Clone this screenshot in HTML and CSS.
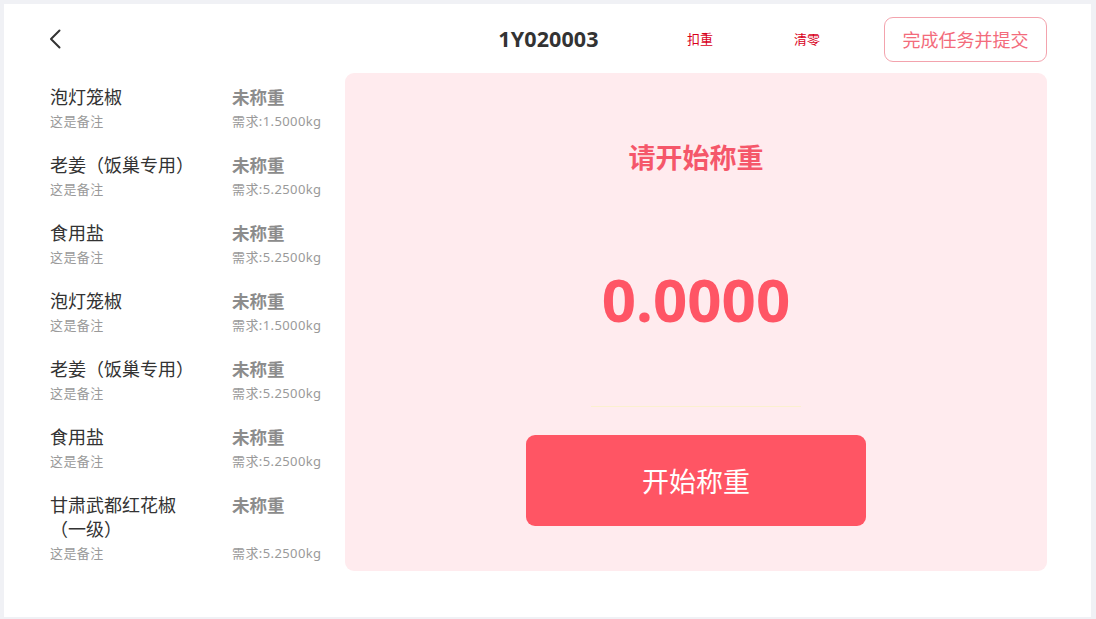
FILE: index.html
```html
<!DOCTYPE html>
<html lang="zh">
<head>
<meta charset="utf-8">
<link rel="stylesheet" href="styles.css">
</head>
<body>
<div class="card">
  <header class="header">
    <div class="header-left">
      <svg class="back" width="12" height="20" viewBox="0 0 12 20"><path d="M10.5 1.5 L2 10 L10.5 18.5" fill="none" stroke="#333" stroke-width="2" stroke-linecap="round" stroke-linejoin="round"/></svg>
    </div>
    <div class="title">1Y020003</div>
    <div class="header-right">
      <span class="link link-deduct">扣重</span>
      <span class="link link-zero">清零</span>
      <button class="submit">完成任务并提交</button>
    </div>
  </header>
  <div class="main">
    <ul class="list">
      <li class="row"><div class="info"><div class="name">泡灯笼椒</div><div class="note">这是备注</div></div><div class="state"><div class="status">未称重</div><div class="need">需求:1.5000kg</div></div></li>
      <li class="row"><div class="info"><div class="name">老姜（饭巢专用）</div><div class="note">这是备注</div></div><div class="state"><div class="status">未称重</div><div class="need">需求:5.2500kg</div></div></li>
      <li class="row"><div class="info"><div class="name">食用盐</div><div class="note">这是备注</div></div><div class="state"><div class="status">未称重</div><div class="need">需求:5.2500kg</div></div></li>
      <li class="row"><div class="info"><div class="name">泡灯笼椒</div><div class="note">这是备注</div></div><div class="state"><div class="status">未称重</div><div class="need">需求:1.5000kg</div></div></li>
      <li class="row"><div class="info"><div class="name">老姜（饭巢专用）</div><div class="note">这是备注</div></div><div class="state"><div class="status">未称重</div><div class="need">需求:5.2500kg</div></div></li>
      <li class="row"><div class="info"><div class="name">食用盐</div><div class="note">这是备注</div></div><div class="state"><div class="status">未称重</div><div class="need">需求:5.2500kg</div></div></li>
      <li class="row"><div class="info"><div class="name">甘肃武都红花椒（一级）</div><div class="note">这是备注</div></div><div class="state"><div class="status">未称重</div><div class="need">需求:5.2500kg</div></div></li>
    </ul>
    <section class="panel">
      <div class="prompt">请开始称重</div>
      <div class="weight">0.0000</div>
      <div class="divider"></div>
      <button class="start">开始称重</button>
    </section>
  </div>
</div>
</body>
</html>
```

FILE: styles.css
```css
* { box-sizing: border-box; }
html, body { margin: 0; padding: 0; }
body {
  width: 1096px;
  height: 619px;
  background: #f0f1f5;
  padding: 4px 5px 2px 4px;
  font-family: "Noto Sans", "Noto Sans CJK SC", sans-serif;
  color: #333;
  overflow: hidden;
}
.card {
  background: #fff;
  height: 613px;
  padding: 13px 44px 46px 46px;
  display: flex;
  flex-direction: column;
}
.header {
  height: 45px;
  display: grid;
  grid-template-columns: 1fr auto 1fr;
  align-items: center;
}
.header-left { display: flex; align-items: center; }
.back { display: block; margin-left: -1px; margin-top: -1px; }
.title {
  font-size: 21.5px;
  line-height: 28px;
  margin-top: -2px;
  font-weight: 700;
  color: #333;
  letter-spacing: 0.1px;
}
.header-right {
  display: flex;
  align-items: center;
  justify-content: flex-end;
}
.link {
  font-size: 13px;
  line-height: 18px;
  margin-top: -2px;
  color: #d9001b;
  font-family: "Noto Sans CJK SC", sans-serif;
}
.link-zero { margin-left: 81px; }
.submit {
  margin-left: 64px;
  width: 163px;
  height: 45px;
  border: 1px solid #f3a3ad;
  border-radius: 9px;
  background: #fff;
  color: #f36b7b;
  font-family: "Noto Sans CJK SC", sans-serif;
  font-size: 18px;
  line-height: 24px;
  padding: 0 0 2px 0;
}
.main {
  flex: 1;
  display: flex;
  margin-top: 11px;
}
.list {
  list-style: none;
  margin: 0;
  padding: 12px 0 0 0;
  width: 295px;
  display: flex;
  flex-direction: column;
  gap: 20px;
}
.row {
  display: flex;
}
.info { width: 182px; }
.name {
  width: 150px;
  font-size: 18px;
  line-height: 24px;
  color: #333;
}
.note, .need {
  font-size: 13px;
  line-height: 24px;
  color: #9a9a9a;
  letter-spacing: 0.4px;
}
.state {
  display: flex;
  flex-direction: column;
  justify-content: space-between;
}
.status {
  font-size: 17.5px;
  line-height: 24px;
  font-weight: 700;
  color: #8c8c8c;
}
.panel {
  flex: 1;
  background: #ffebee;
  border-radius: 9px;
  display: flex;
  flex-direction: column;
  align-items: center;
  padding-top: 66px;
}
.prompt {
  font-size: 27px;
  line-height: 36px;
  font-weight: 700;
  color: #f5576a;
  font-family: "Noto Sans CJK SC", sans-serif;
}
.weight {
  margin-top: 84px;
  font-size: 60px;
  line-height: 80px;
  font-weight: 700;
  color: #ff5565;
}
.divider {
  margin-top: 67px;
  width: 210px;
  height: 1px;
  background: #fbf0cf;
}
.start {
  margin-top: 28px;
  width: 340px;
  height: 91px;
  border: none;
  border-radius: 9px;
  background: #ff5564;
  color: #fff;
  font-family: "Noto Sans CJK SC", sans-serif;
  font-size: 27px;
  padding: 0;
}
```
